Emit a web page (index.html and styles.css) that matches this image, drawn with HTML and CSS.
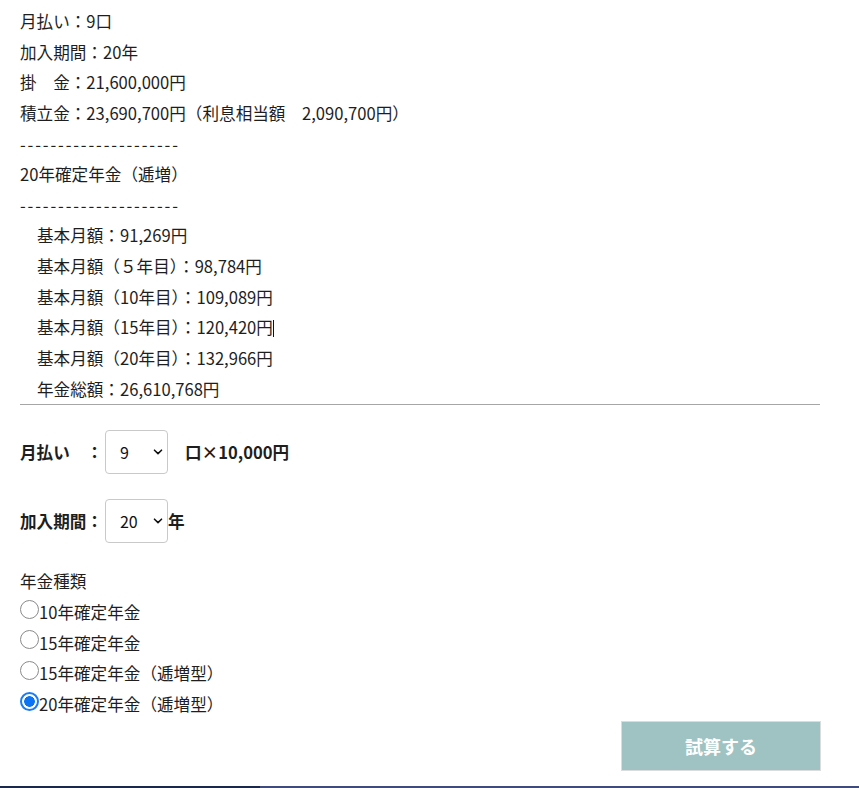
FILE: index.html
```html
<!DOCTYPE html>
<html lang="ja">
<head>
<meta charset="utf-8">
<title>試算</title>
<link rel="stylesheet" href="styles.css">
</head>
<body>
<div class="page">
  <div class="result">
    <div class="line">月払い：9口</div>
    <div class="line">加入期間：20年</div>
    <div class="line">掛　金：21,600,000円</div>
    <div class="line">積立金：23,690,700円（利息相当額　2,090,700円）</div>
    <div class="line dashes">---------------------</div>
    <div class="line">20年確定年金（逓増）</div>
    <div class="line dashes">---------------------</div>
    <div class="line indent">基本月額：91,269円</div>
    <div class="line indent">基本月額（５年目）：98,784円</div>
    <div class="line indent">基本月額（10年目）：109,089円</div>
    <div class="line indent">基本月額（15年目）：120,420円<span class="caret"></span></div>
    <div class="line indent">基本月額（20年目）：132,966円</div>
    <div class="line indent">年金総額：26,610,768円</div>
  </div>
  <hr class="rule">
  <form class="form">
    <div class="row row-first">
      <span class="label">月払い　：</span>
      <span class="select-wrap">
        <select class="select"><option>1</option><option>5</option><option selected>9</option><option>10</option></select>
        <svg class="chev" width="10" height="6" viewBox="0 0 10 6"><path d="M1.5 1.2 L5 4.6 L8.5 1.2" fill="none" stroke="#111" stroke-width="1.6" stroke-linecap="round" stroke-linejoin="round"/></svg>
      </span>
      <span class="label unit-gap">口×10,000円</span>
    </div>
    <div class="row row-second">
      <span class="label">加入期間：</span>
      <span class="select-wrap">
        <select class="select"><option>10</option><option>15</option><option selected>20</option></select>
        <svg class="chev" width="10" height="6" viewBox="0 0 10 6"><path d="M1.5 1.2 L5 4.6 L8.5 1.2" fill="none" stroke="#111" stroke-width="1.6" stroke-linecap="round" stroke-linejoin="round"/></svg>
      </span>
      <span class="label">年</span>
    </div>
    <div class="kinds">
      <div class="line">年金種類</div>
      <label class="radio-line"><input type="radio" name="kind" class="radio">10年確定年金</label>
      <label class="radio-line"><input type="radio" name="kind" class="radio">15年確定年金</label>
      <label class="radio-line"><input type="radio" name="kind" class="radio">15年確定年金（逓増型）</label>
      <label class="radio-line"><input type="radio" name="kind" class="radio" checked>20年確定年金（逓増型）</label>
    </div>
    <div class="actions">
      <button type="button" class="submit">試算する</button>
    </div>
  </form>
</div>
<div class="footer-bar">
  <div class="footer-left"></div>
  <div class="footer-right"></div>
</div>
</body>
</html>
```

FILE: styles.css
```css
html, body {
  margin: 0;
  padding: 0;
  background: #fff;
}
body {
  min-height: 100vh;
  display: flex;
  flex-direction: column;
  font-family: "Noto Sans CJK JP", "Noto Sans", sans-serif;
  font-size: 16.6px;
  color: #1e1e1e;
}
.page {
  width: 800px;
  padding: 6px 20px 0 20px;
}
.line {
  line-height: 30.65px;
  height: 30.65px;
  white-space: nowrap;
}
.dashes {
  letter-spacing: 1.85px;
}
.indent {
  padding-left: 17px;
}
.caret {
  display: inline-block;
  width: 1px;
  height: 17px;
  background: #111;
  vertical-align: -3px;
}
.rule {
  margin: 0;
  border: 0;
  border-top: 1px solid #a6a6a6;
  height: 0;
}
.form {
  margin: 0;
}
.row {
  display: flex;
  align-items: center;
  height: 44px;
}
.row-first {
  margin-top: 25px;
}
.row-second {
  margin-top: 25px;
}
.label {
  font-weight: 700;
  white-space: nowrap;
}
.unit-gap {
  margin-left: 17px;
}
.select-wrap {
  position: relative;
  display: inline-block;
  margin-left: 2px;
  width: 63px;
  height: 44px;
}
.select {
  -webkit-appearance: none;
  appearance: none;
  width: 63px;
  height: 44px;
  box-sizing: border-box;
  border: 1px solid #c9c9c9;
  border-radius: 4px;
  background: #fff;
  padding: 0 0 0 14px;
  font-family: "Noto Sans CJK JP", "Noto Sans", sans-serif;
  font-size: 16px;
  color: #111;
}
.chev {
  position: absolute;
  right: 5px;
  top: 19px;
  pointer-events: none;
}
.kinds {
  margin-top: 23px;
}
.radio-line {
  display: flex;
  align-items: center;
  height: 30.65px;
  line-height: 30.65px;
  white-space: nowrap;
}
.radio {
  -webkit-appearance: none;
  appearance: none;
  margin: 0;
  width: 19px;
  height: 19px;
  box-sizing: border-box;
  border: 1px solid #8a8a8a;
  border-radius: 50%;
  background: #fff;
  position: relative;
  top: -3px;
}
.radio:checked {
  border: 2px solid #1a7cf5;
  background: radial-gradient(circle, #0a74f5 0 5px, #fff 5.6px);
}
.actions {
  display: flex;
  justify-content: flex-end;
  margin-top: 1px;
}
.submit {
  width: 200px;
  height: 50px;
  box-sizing: border-box;
  background: #9fc3c3;
  border: 1px solid #dcdcdc;
  color: #fff;
  font-family: "Noto Sans CJK JP", "Noto Sans", sans-serif;
  font-size: 18px;
  font-weight: 700;
  padding: 0;
  margin-right: -1px;
}
.footer-bar {
  margin-top: auto;
  display: flex;
  height: 2px;
}
.footer-left {
  width: 260px;
  background: #1b2849;
}
.footer-right {
  flex: 1;
  background: #3f4c7b;
}
```
